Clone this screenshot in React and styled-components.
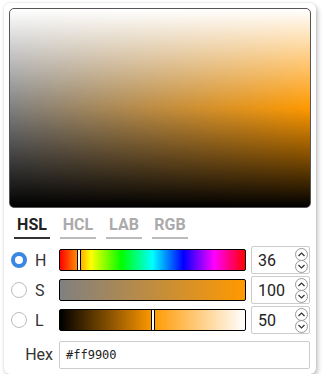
import React from "react";
import styled, { createGlobalStyle } from "styled-components";

const Global = createGlobalStyle`
  html, body { margin: 0; padding: 0; background: #fff; }
  body { font-family: Roboto, "Noto Sans", sans-serif; }
`;

const Card = styled.div`
  width: 312px;
  box-sizing: border-box;
  margin: 3px 0 0 4px;
  padding: 5px 5px 5px;
  background: #fff;
  border-radius: 6px;
  box-shadow: 0 0 3px rgba(0, 0, 0, 0.12), 2px 3px 5px rgba(0, 0, 0, 0.22);
  display: flex;
  flex-direction: column;
`;

const Picker = styled.div`
  height: 200px;
  box-sizing: border-box;
  border: 1px solid #555;
  border-radius: 5px;
  background:
    linear-gradient(to bottom, #fff 0%, rgba(255,255,255,0) 50%, rgba(0,0,0,0) 50%, #000 100%),
    linear-gradient(to right, #808080, #ff9900);
`;

const Tabs = styled.div`
  display: flex;
  gap: 10px;
  margin: 7px 0 0 5px;
`;

const Tab = styled.div`
  width: 36px;
  text-align: center;
  font: 700 16px/19px Roboto, sans-serif;
  color: ${(p) => (p.$active ? "#222" : "#aaa")};
  padding-bottom: 3px;
  border-bottom: 2px solid ${(p) => (p.$active ? "#333" : "#bbb")};
`;

const Grid = styled.div`
  display: grid;
  grid-template-columns: 45px 1fr 59px;
  grid-template-rows: 30px 30px 30px 34px;
  column-gap: 5px;
  margin: 6px 1px 0 0;
  align-items: center;
`;

const LabelCell = styled.div`
  display: flex;
  align-items: center;
  gap: 8px;
  padding-left: 2px;
  font: 400 16px/19px Roboto, sans-serif;
  color: #333;
`;

const Radio = styled.span`
  width: 16px;
  height: 16px;
  box-sizing: border-box;
  border-radius: 50%;
  background: #fff;
  border: ${(p) => (p.$checked ? "4px solid #3b87e6" : "1px solid #bdbdbd")};
`;

const Track = styled.div`
  position: relative;
  height: 22px;
  box-sizing: border-box;
  border: 1px solid #000;
  border-radius: 2px;
  background: ${(p) => p.$bg};
`;

const Marker = styled.div`
  position: absolute;
  top: 0;
  bottom: 0;
  width: 2px;
  background: #fff;
  border-left: 1px solid #000;
  border-right: 1px solid #000;
`;

const NumBox = styled.div`
  height: 28px;
  box-sizing: border-box;
  border: 1px solid #ccc;
  border-radius: 2px;
  display: flex;
  align-items: center;
  padding-left: 6px;
  font: 400 16px/19px Roboto, sans-serif;
  color: #222;
`;

const Spin = styled.div`
  margin-left: auto;
  margin-right: 1px;
  display: flex;
  flex-direction: column;
`;

const SpinBtn = styled.div`
  width: 13px;
  height: 13px;
  box-sizing: border-box;
  border: 1px solid #999;
  border-radius: 50%;
  background: #fff;
  display: flex;
  align-items: center;
  justify-content: center;
  & + & { margin-top: -1px; }
`;

const HexLabel = styled.div`
  font: 400 16px/28px Roboto, sans-serif;
  color: #333;
  text-align: right;
  padding-right: 1px;
  align-self: end;
`;

const HexBox = styled.div`
  grid-column: 2 / 4;
  align-self: end;
  height: 28px;
  box-sizing: border-box;
  border: 1px solid #ccc;
  border-radius: 2px;
  display: flex;
  align-items: center;
  padding-left: 6px;
  font: 400 12px/14px "DejaVu Sans Mono", monospace;
  color: #222;
`;

const Chevron = ({ up }) => (
  <svg width="7" height="5" viewBox="0 0 7 5">
    <polyline
      points={up ? "0.5,4 3.5,1 6.5,4" : "0.5,1 3.5,4 6.5,1"}
      fill="none"
      stroke="#333"
      strokeWidth="1.2"
    />
  </svg>
);

const rows = [
  {
    key: "H",
    checked: true,
    value: 36,
    pos: 36 / 360,
    bg: "linear-gradient(to right, #f00 0%, #ff0 16.67%, #0f0 33.33%, #0ff 50%, #00f 66.67%, #f0f 83.33%, #f00 100%)",
  },
  {
    key: "S",
    value: 100,
    pos: 1,
    bg: "linear-gradient(to right, #808080, #ff9900)",
  },
  {
    key: "L",
    value: 50,
    pos: 0.5,
    bg: "linear-gradient(to right, #000, #ff9900 50%, #fff)",
  },
];

export default function App() {
  return (
    <>
      <Global />
      <Card>
        <Picker />
        <Tabs>
          <Tab $active>HSL</Tab>
          <Tab>HCL</Tab>
          <Tab>LAB</Tab>
          <Tab>RGB</Tab>
        </Tabs>
        <Grid>
          {rows.map((r) => (
            <React.Fragment key={r.key}>
              <LabelCell>
                <Radio $checked={r.checked} />
                {r.key}
              </LabelCell>
              <Track $bg={r.bg}>
                {r.pos < 1 && (
                  <Marker style={{ left: `calc(${r.pos * 100}% - 2px)` }} />
                )}
              </Track>
              <NumBox>
                {r.value}
                <Spin>
                  <SpinBtn>
                    <Chevron up />
                  </SpinBtn>
                  <SpinBtn>
                    <Chevron />
                  </SpinBtn>
                </Spin>
              </NumBox>
            </React.Fragment>
          ))}
          <HexLabel>Hex</HexLabel>
          <HexBox>#ff9900</HexBox>
        </Grid>
      </Card>
    </>
  );
}
